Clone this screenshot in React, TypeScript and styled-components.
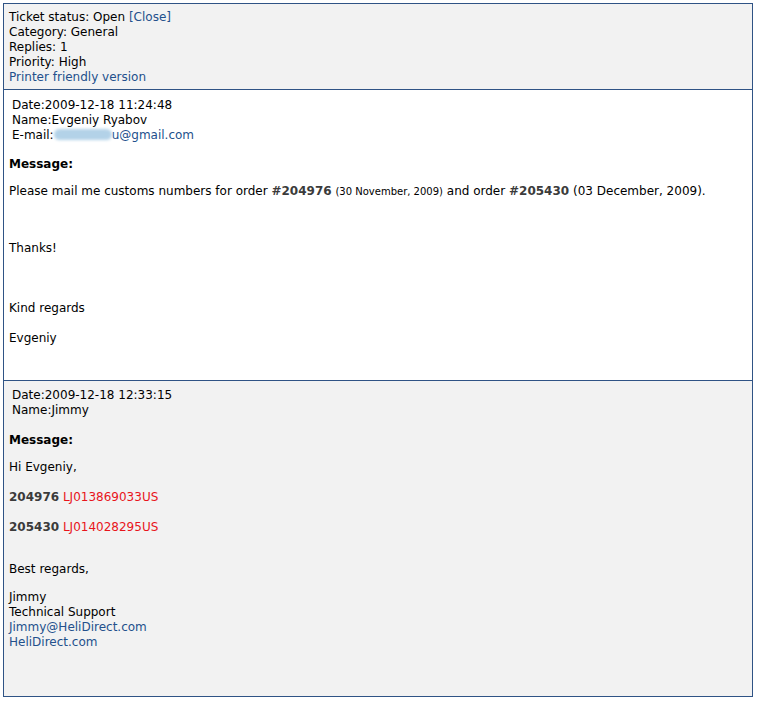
import React from "react";
import styled, { createGlobalStyle } from "styled-components";

const Global = createGlobalStyle`
  html, body { margin: 0; padding: 0; background: #ffffff; }
  body { font-family: Verdana, "DejaVu Sans", sans-serif; font-size: 12px; color: #000; }
`;

const Frame = styled.div`
  margin: 3px 0 0 3px;
  width: 750px;
  box-sizing: border-box;
  border: 1px solid #2f5385;
`;

const Panel = styled.section<{ $bg: string; $pt: number; $pb: number; $last?: boolean }>`
  background: ${(p) => p.$bg};
  padding: ${(p) => p.$pt}px 6px ${(p) => p.$pb}px 5px;
  border-bottom: ${(p) => (p.$last ? "none" : "1px solid #2f5385")};
  line-height: 15px;
`;

const Line = styled.div<{ $top?: number }>`
  margin-top: ${(p) => p.$top ?? 0}px;
  white-space: nowrap;
`;

const Meta = styled.div`
  padding-left: 3px;
`;

const Link = styled.a`
  color: #23508c;
  text-decoration: none;
`;

const Strong = styled.b`
  font-weight: bold;
`;

const Order = styled.b`
  font-weight: bold;
  color: #3b3b3b;
`;

const Small = styled.span`
  font-size: 10px;
`;

const Track = styled.span`
  color: #e8141b;
`;

const Blur = styled.span`
  display: inline-block;
  width: 58px;
  height: 11px;
  vertical-align: -1px;
  border-radius: 6px;
  background: #b3d2e8;
  filter: blur(1.8px);
`;

export default function App() {
  return (
    <>
      <Global />
      <Frame>
        <Panel $bg="#f2f2f2" $pt={6} $pb={4}>
          <Line>
            Ticket status: Open <Link href="#">[Close]</Link>
          </Line>
          <Line>Category: General</Line>
          <Line>Replies: 1</Line>
          <Line>Priority: High</Line>
          <Line>
            <Link href="#">Printer friendly version</Link>
          </Line>
        </Panel>

        <Panel $bg="#ffffff" $pt={8} $pb={34}>
          <Meta>
            <Line>Date:2009-12-18 11:24:48</Line>
            <Line>Name:Evgeniy Ryabov</Line>
            <Line>
              E-mail:
              <Blur />
              <Link href="#">u@gmail.com</Link>
            </Line>
          </Meta>
          <Line $top={14}>
            <Strong>Message:</Strong>
          </Line>
          <Line $top={12}>
            Please mail me customs numbers for order <Order>#204976</Order>{" "}
            <Small>(30 November, 2009)</Small> and order <Order>#205430</Order> (03 December,
            2009).
          </Line>
          <Line $top={42}>Thanks!</Line>
          <Line $top={45}>Kind regards</Line>
          <Line $top={15}>Evgeniy</Line>
        </Panel>

        <Panel $bg="#f2f2f2" $pt={7} $pb={46} $last>
          <Meta>
            <Line>Date:2009-12-18 12:33:15</Line>
            <Line>Name:Jimmy</Line>
          </Meta>
          <Line $top={15}>
            <Strong>Message:</Strong>
          </Line>
          <Line $top={12}>Hi Evgeniy,</Line>
          <Line $top={15}>
            <Order>204976</Order> <Track>LJ013869033US</Track>
          </Line>
          <Line $top={15}>
            <Order>205430</Order> <Track>LJ014028295US</Track>
          </Line>
          <Line $top={27}>Best regards,</Line>
          <Line $top={13}>Jimmy</Line>
          <Line>Technical Support</Line>
          <Line>
            <Link href="#">Jimmy@HeliDirect.com</Link>
          </Line>
          <Line>
            <Link href="#">HeliDirect.com</Link>
          </Line>
        </Panel>
      </Frame>
    </>
  );
}
